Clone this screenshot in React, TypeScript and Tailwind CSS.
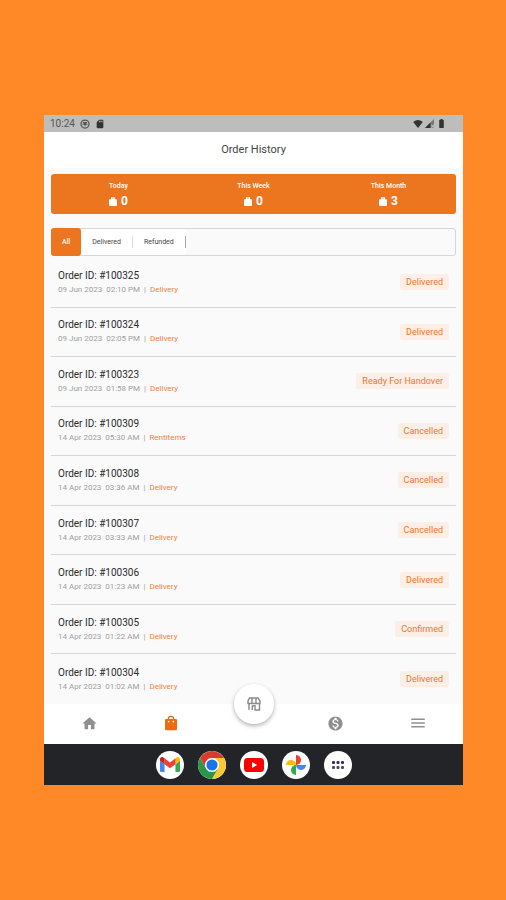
import { MdBatteryFull, MdHome, MdMenu, MdMonetizationOn, MdSdCard } from 'react-icons/md';

type Order = {
  id: string;
  date: string;
  type: string;
  status: string;
};

const orders: Order[] = [
  { id: '100325', date: '09 Jun 2023  02:10 PM', type: 'Delivery', status: 'Delivered' },
  { id: '100324', date: '09 Jun 2023  02:05 PM', type: 'Delivery', status: 'Delivered' },
  { id: '100323', date: '09 Jun 2023  01:58 PM', type: 'Delivery', status: 'Ready For Handover' },
  { id: '100309', date: '14 Apr 2023  05:30 AM', type: 'Rentitems', status: 'Cancelled' },
  { id: '100308', date: '14 Apr 2023  03:36 AM', type: 'Delivery', status: 'Cancelled' },
  { id: '100307', date: '14 Apr 2023  03:33 AM', type: 'Delivery', status: 'Cancelled' },
  { id: '100306', date: '14 Apr 2023  01:23 AM', type: 'Delivery', status: 'Delivered' },
  { id: '100305', date: '14 Apr 2023  01:22 AM', type: 'Delivery', status: 'Confirmed' },
  { id: '100304', date: '14 Apr 2023  01:02 AM', type: 'Delivery', status: 'Delivered' },
];

const stats = [
  { label: 'Today', value: 0 },
  { label: 'This Week', value: 0 },
  { label: 'This Month', value: 3 },
];

const BagIcon = () => (
  <svg viewBox="0 0 24 24" className="size-4" aria-hidden="true">
    <path
      fill="currentColor"
      fillRule="evenodd"
      d="M12 1a5 5 0 0 0-5 5H4.5A1.500 1.500 0 0 0 3 7.500V21a2 2 0 0 0 2 2h14a2 2 0 0 0 2-2V7.500A1.500 1.500 0 0 0 19.500 6H17a5 5 0 0 0-5-5Zm0 2a3 3 0 0 1 3 3H9a3 3 0 0 1 3-3ZM8.500 8.500a1.300 1.300 0 1 1 0 2.600 1.300 1.300 0 0 1 0-2.600Zm7 0a1.300 1.300 0 1 1 0 2.600 1.300 1.300 0 0 1 0-2.600Z"
    />
  </svg>
);

const PackageIcon = () => (
  <svg viewBox="0 0 8 9" className="h-[9px] w-2" aria-hidden="true">
    <path fill="currentColor" d="M1.500 2.500 2.500 0h1.200v2h.6V0h1.200l1 2.500H8V8a1 1 0 0 1-1 1H1a1 1 0 0 1-1-1V2.500z" />
  </svg>
);

const StoreIcon = () => (
  <svg viewBox="0 0 16 16" className="size-4" fill="none" stroke="#858c8b" strokeWidth="1.400" aria-hidden="true">
    <path d="M2 7.500V5l1.500-3H12l2 3v2.500" />
    <path d="M6 2v5.500M10 2v5.500M1.500 7.500H14.500" />
    <path d="M3 7.500V14M6.300 9.500V14M6.300 9.800H9V14h4.500V7.500" />
  </svg>
);

const FaceIcon = () => (
  <svg viewBox="0 0 12 12" className="size-[10px]" aria-hidden="true">
    <circle cx="6" cy="6" r="4.800" fill="none" stroke="#555" strokeWidth="1.500" />
    <path fill="#555" d="M3.500 3.500h5L7.800 6H9v1H7L6 9 5 7H3V6h1.200z" />
  </svg>
);

const WifiIcon = () => (
  <svg viewBox="0 0 24 20" className="h-2 w-[10px]" aria-hidden="true">
    <path fill="#333" d="M12 20 0 5a19 19 0 0 1 24 0L12 20Z" />
  </svg>
);

const SignalIcon = () => (
  <svg viewBox="0 0 10 10" className="size-[9px]" aria-hidden="true">
    <path fill="#777" d="M0 10 10 0v10z" />
    <path fill="#333" d="M0 10 6 4v6z" />
    <path stroke="#bdbdbd" strokeWidth="1.200" d="m7 6.500 3 3m0-3-3 3" />
  </svg>
);

const GmailIcon = () => (
  <svg viewBox="52 42 88 66" className="w-5" aria-hidden="true">
    <path fill="#4285f4" d="M58 108h14V74L52 59v43c0 3.320 2.690 6 6 6" />
    <path fill="#34a853" d="M120 108h14c3.320 0 6-2.690 6-6V59l-20 15" />
    <path fill="#fbbc04" d="M120 48v26l20-15v-8c0-7.420-8.470-11.650-14.400-7.200" />
    <path fill="#ea4335" d="M72 74V48l24 18 24-18v26L96 92" />
    <path fill="#c5221f" d="M52 51v8l20 15V48l-5.600-4.200c-5.940-4.450-14.400-.220-14.400 7.200" />
  </svg>
);

const ChromeIcon = () => (
  <svg viewBox="0 0 24 24" className="size-7" aria-hidden="true">
    <circle cx="12" cy="12" r="6.500" fill="#fff" />
    <path fill="#db3a2c" d="M12 6h10.390A12 12 0 0 0 1.610 6L6.800 15A6 6 0 0 1 12 6Z" />
    <path fill="#fcc934" d="M12 6h10.390A12 12 0 0 1 12 24l5.200-9A6 6 0 0 0 12 6Z" />
    <path fill="#279847" d="M1.610 6A12 12 0 0 0 12 24l5.200-9a6 6 0 0 1-10.400 0Z" />
    <circle cx="12" cy="12" r="4.800" fill="#1a73e8" />
  </svg>
);

const YoutubeIcon = () => (
  <svg viewBox="0 0 20 14" className="w-5" aria-hidden="true">
    <rect width="20" height="14" rx="3.500" fill="#f00" />
    <path fill="#fff" d="m8 4 5.200 3L8 10z" />
  </svg>
);

const PhotosIcon = () => (
  <svg viewBox="2 2 20 20" className="size-5" aria-hidden="true">
    <path fill="#ea4335" d="M12 2a5 5 0 0 1 0 10z" />
    <path fill="#4285f4" d="M22 12a5 5 0 0 1-10 0z" />
    <path fill="#34a853" d="M12 22a5 5 0 0 1 0-10z" />
    <path fill="#fbbc04" d="M2 12a5 5 0 0 1 10 0z" />
  </svg>
);

const AppsIcon = () => (
  <svg viewBox="0 0 14 10" className="w-[14px]" aria-hidden="true">
    <g fill="#2f2f78">
      <rect x="1" y="1" width="3" height="3" rx="1" />
      <rect x="5.500" y="1" width="3" height="3" rx="1" />
      <rect x="10" y="1" width="3" height="3" rx="1" />
    </g>
    <g fill="#4b4b60">
      <rect x="1" y="6" width="3" height="3" rx="1" />
      <rect x="5.500" y="6" width="3" height="3" rx="1" />
      <rect x="10" y="6" width="3" height="3" rx="1" />
    </g>
  </svg>
);

const dockApps = [
  { name: 'Gmail', icon: <GmailIcon /> },
  { name: 'Chrome', icon: <ChromeIcon /> },
  { name: 'YouTube', icon: <YoutubeIcon /> },
  { name: 'Photos', icon: <PhotosIcon /> },
  { name: 'Apps', icon: <AppsIcon /> },
];

const OrderRow = ({ order }: { order: Order }) => (
  <li className="flex items-center justify-between border-b border-[#d5d6d8] px-[7px] last:border-b-0">
    <div>
      <h2 className="text-[10px] leading-[14px] text-[#2b2b2b]">Order ID: #{order.id}</h2>
      <p className="flex gap-[4px] text-[8px] leading-[13px] text-[#9f9f9f]">
        <span className="whitespace-pre">{order.date}</span>
        <span>|</span>
        <span className="text-[#f0803f]">{order.type}</span>
      </p>
    </div>
    <span className="rounded-xs bg-[#fdefe6] px-[6px] text-[9px] leading-4 text-[#ee7434]">{order.status}</span>
  </li>
);

const App = () => {
  return (
    <div className="flex min-h-screen flex-col justify-center bg-[#ff8926] pr-[43px] pl-11 font-['Roboto',sans-serif]">
      <div className="flex flex-col bg-[#fafafa]">
        {/* Status bar */}
        <div className="flex h-[17px] items-center justify-between bg-[#bdbdbd] px-[6px] text-[#333]">
          <div className="flex items-center gap-[5px]">
            <span className="text-[10px] leading-none text-[#555]">10:24</span>
            <FaceIcon />
            <MdSdCard size={10} />
          </div>
          <div className="flex items-center gap-[2px] pr-[10px]">
            <WifiIcon />
            <SignalIcon />
            <MdBatteryFull size={11} />
          </div>
        </div>

        {/* Title */}
        <header className="flex h-9 items-center justify-center bg-white">
          <h1 className="text-[11px] text-[#444]">Order History</h1>
        </header>

        <main className="px-[7px] pt-[6px]">
          {/* Order counts */}
          <div className="grid h-10 grid-cols-3 rounded-[3px] bg-[#ec7620] text-white">
            {stats.map((stat) => (
              <div key={stat.label} className="flex flex-col items-center justify-center">
                <p className="text-[7px] leading-[14px] font-medium">{stat.label}</p>
                <p className="flex items-center gap-1 text-[12px] leading-4 font-bold">
                  <PackageIcon />
                  {stat.value}
                </p>
              </div>
            ))}
          </div>

          {/* Filters */}
          <div className="mt-[14px] flex h-7 rounded-[3px] border border-[#d5d6d8] text-[7px]">
            <button type="button" className="-my-px -ml-px rounded-[3px] bg-[#ec7620] px-[11px] font-medium text-white">
              All
            </button>
            <button type="button" className="flex items-center bg-white pl-[11px] text-[#444]">
              <span className="border-r border-[#ddd] pr-[11px] leading-[12px]">Delivered</span>
            </button>
            <button type="button" className="flex items-center bg-white pl-[11px] text-[#444]">
              <span className="border-r border-[#aaa] pr-[11px] leading-[12px]">Refunded</span>
            </button>
          </div>

          {/* Orders */}
          <ul className="mt-[2px] grid min-h-[446px] auto-rows-fr">
            {orders.map((order) => (
              <OrderRow key={order.id} order={order} />
            ))}
          </ul>
        </main>

        {/* Bottom navigation */}
        <nav className="relative grid h-10 grid-cols-5 items-center justify-items-center bg-white px-1 pb-[2px] text-[#8f8f8f]">
          <a href="#home" aria-label="Home">
            <MdHome size={17} />
          </a>
          <a href="#orders" aria-label="Orders" className="text-[#ec6a10]">
            <BagIcon />
          </a>
          <a
            href="#store"
            aria-label="Store"
            className="absolute -top-5 left-1/2 flex size-10 -translate-x-1/2 items-center justify-center rounded-full bg-white shadow-[0_2px_4px_rgba(0,0,0,0.3)]"
          >
            <StoreIcon />
          </a>
          <a href="#wallet" aria-label="Wallet" className="col-start-4">
            <MdMonetizationOn size={17} />
          </a>
          <a href="#menu" aria-label="Menu">
            <MdMenu size={18} />
          </a>
        </nav>

        {/* System dock */}
        <div className="flex h-[41px] items-center justify-center gap-[14px] bg-[#232428]">
          {dockApps.map((app) => (
            <button
              key={app.name}
              type="button"
              aria-label={app.name}
              className="flex size-7 items-center justify-center rounded-full bg-white"
            >
              {app.icon}
            </button>
          ))}
        </div>
      </div>
    </div>
  );
};

export default App;
